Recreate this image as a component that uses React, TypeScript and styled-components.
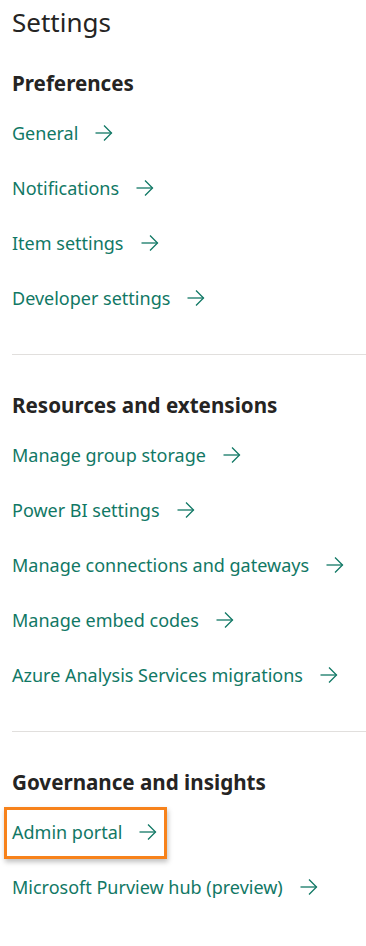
import React from 'react';
import styled, { createGlobalStyle } from 'styled-components';

const GlobalStyle = createGlobalStyle`
  body {
    margin: 0;
    background: #ffffff;
    font-family: "Noto Sans", "Open Sans", sans-serif;
  }
`;

const Page = styled.div`
  width: 366px;
  padding-left: 12px;
  box-sizing: border-box;
  color: #252423;
`;

const Title = styled.h1`
  margin: 0;
  height: 44px;
  line-height: 44px;
  font-size: 26px;
  font-weight: 400;
`;

const Section = styled.section<{ $first?: boolean }>`
  margin-top: ${({ $first }) => ($first ? '25px' : '36px')};
`;

const SectionHeading = styled.h2`
  margin: 0 0 8px 0;
  height: 28px;
  line-height: 28px;
  font-size: 20.6px;
  font-weight: 700;
`;

const LinkList = styled.ul`
  list-style: none;
  margin: 0;
  padding: 0;
`;

const LinkRow = styled.li`
  position: relative;
  height: 55px;
  display: flex;
  align-items: center;
`;

const NavLink = styled.a`
  display: inline-flex;
  align-items: center;
  gap: 17px;
  color: #117865;
  font-size: 18px;
  text-decoration: none;
  cursor: pointer;
`;

const Highlight = styled.div`
  position: absolute;
  left: -8px;
  top: 3px;
  width: 163px;
  height: 52px;
  box-sizing: border-box;
  border: 3px solid #f7821b;
  box-shadow: 1px 3px 5px rgba(0, 0, 0, 0.25);
  pointer-events: none;
`;

const Divider = styled.hr`
  margin: 29px 0 0 0;
  border: none;
  border-top: 1px solid #e1dfdd;
`;

const Arrow = () => (
  <svg width="18" height="16" viewBox="0 0 18 16" fill="none" stroke="#117865" strokeWidth="1.3">
    <path d="M0.5 8H16.5" />
    <path d="M9 0.5L16.5 8L9 15.5" />
  </svg>
);

interface Group {
  title: string;
  links: string[];
}

const groups: Group[] = [
  {
    title: 'Preferences',
    links: ['General', 'Notifications', 'Item settings', 'Developer settings'],
  },
  {
    title: 'Resources and extensions',
    links: [
      'Manage group storage',
      'Power BI settings',
      'Manage connections and gateways',
      'Manage embed codes',
      'Azure Analysis Services migrations',
    ],
  },
  {
    title: 'Governance and insights',
    links: ['Admin portal', 'Microsoft Purview hub (preview)'],
  },
];

const App: React.FC = () => {
  return (
    <>
      <GlobalStyle />
      <Page>
        <Title>Settings</Title>
        {groups.map((group, i) => (
          <React.Fragment key={group.title}>
            {i > 0 && <Divider />}
            <Section $first={i === 0}>
              <SectionHeading>{group.title}</SectionHeading>
              <LinkList>
                {group.links.map((link) => (
                  <LinkRow key={link}>
                    <NavLink>
                      {link}
                      <Arrow />
                    </NavLink>
                    {link === 'Admin portal' && <Highlight />}
                  </LinkRow>
                ))}
              </LinkList>
            </Section>
          </React.Fragment>
        ))}
      </Page>
    </>
  );
};

export default App;
